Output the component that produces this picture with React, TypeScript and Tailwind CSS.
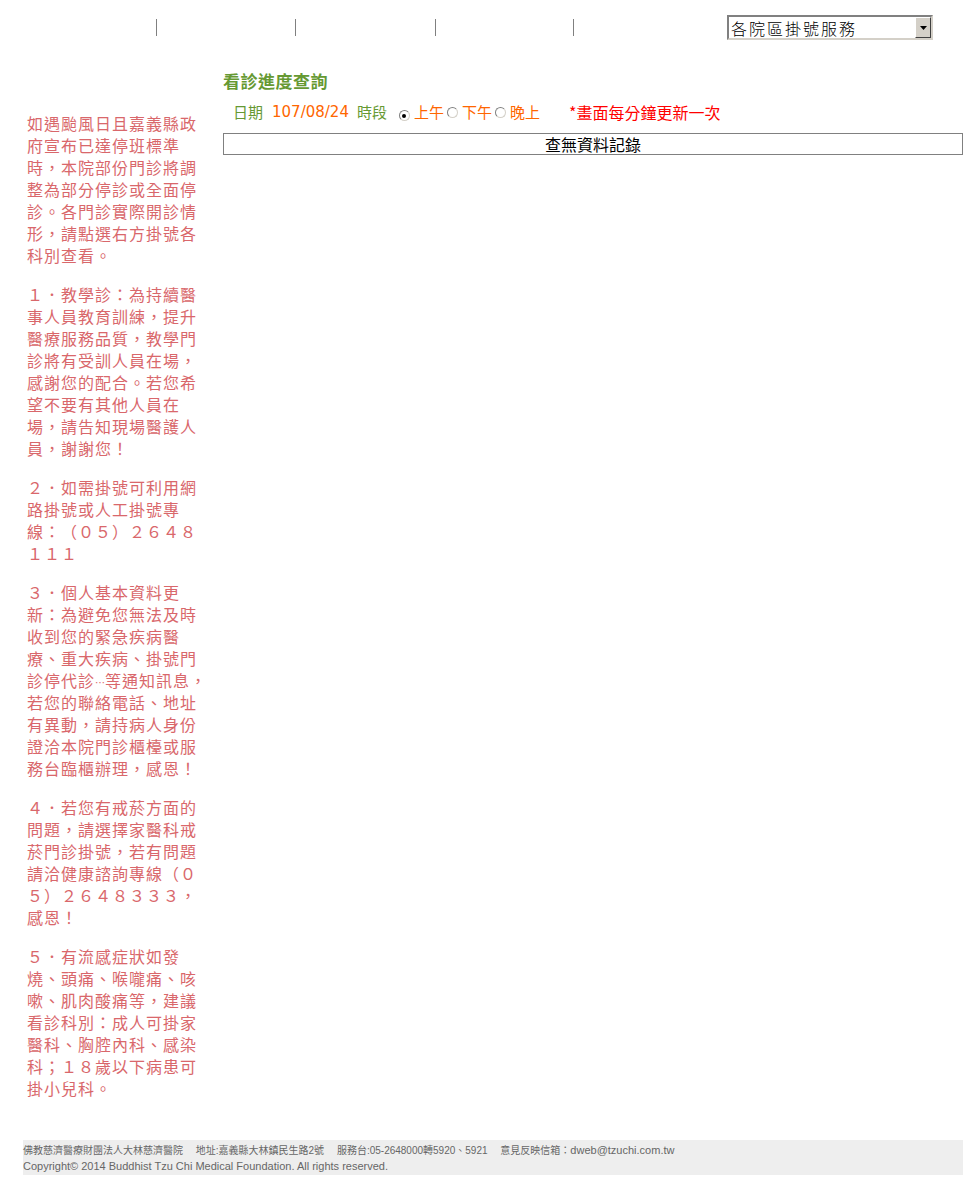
const sideParas: React.ReactNode[] = [
  "如遇颱風日且嘉義縣政府宣布已達停班標準時，本院部份門診將調整為部分停診或全面停診。各門診實際開診情形，請點選右方掛號各科別查看。",
  "１．教學診：為持續醫事人員教育訓練，提升醫療服務品質，教學門診將有受訓人員在場，感謝您的配合。若您希望不要有其他人員在場，請告知現場醫護人員，謝謝您！",
  "２．如需掛號可利用網路掛號或人工掛號專線：（０５）２６４８１１１",
  <>
    ３．個人基本資料更新：為避免您無法及時收到您的緊急疾病醫療、重大疾病、掛號門診停代診
    <span className="text-[10px] leading-none tracking-normal">…</span>
    等通知訊息，若您的聯絡電話、地址有異動，請持病人身份證洽本院門診櫃檯或服務台臨櫃辦理，感恩！
  </>,
  "４．若您有戒菸方面的問題，請選擇家醫科戒菸門診掛號，若有問題請洽健康諮詢專線（０５）２６４８３３３，感恩！",
  "５．有流感症狀如發燒、頭痛、喉嚨痛、咳嗽、肌肉酸痛等，建議看診科別：成人可掛家醫科、胸腔內科、感染科；１８歲以下病患可掛小兒科。",
];

const Radio = ({ checked }: { checked?: boolean }) => (
  <span className="inline-flex h-[11px] w-[11px] items-center justify-center rounded-full border border-t-[#808080] border-l-[#808080] border-r-[#d4d0c8] border-b-[#d4d0c8] bg-white">
    {checked && <span className="h-[4px] w-[4px] rounded-full bg-black" />}
  </span>
);

export default function App() {
  return (
    <div className="ml-[23px] w-[940px] font-['Noto_Sans_CJK_TC',sans-serif] text-black [text-spacing-trim:space-all]">
      {/* header nav */}
      <header className="flex h-[55px] items-start pt-[15px]">
        <div className="w-[133px]" />
        <div className="mt-[4px] h-[17px] w-[139px] border-l border-[#808080]" />
        <div className="mt-[4px] h-[17px] w-[140px] border-l border-[#808080]" />
        <div className="mt-[4px] h-[17px] w-[138px] border-l border-[#808080]" />
        <div className="mt-[4px] h-[17px] w-[154px] border-l border-[#808080]" />
        <div className="flex h-[25px] w-[206px] items-center border-2 border-t-[#808080] border-l-[#808080] border-r-[#d4d0c8] border-b-[#d4d0c8] bg-white pl-[2px]">
          <span className="flex-1 text-[16px] leading-none tracking-[2px] font-light">各院區掛號服務</span>
          <span className="flex h-[21px] w-[16px] items-center justify-center border border-t-white border-l-white border-r-[#404040] border-b-[#404040] bg-[#d4d0c8]">
            <svg width="7" height="4" viewBox="0 0 7 4">
              <path d="M0 0h7L3.5 4z" fill="#000" />
            </svg>
          </span>
        </div>
      </header>

      <div className="flex">
        {/* sidebar notes */}
        <aside className="w-[200px] pl-[4px] pt-[57px]">
          <div className="w-[182px] text-[16px] leading-[22px] tracking-[1px] text-[#d9676b]">
            {sideParas.map((p, i) => (
              <p key={i} className="mb-[17px]">
                {p}
              </p>
            ))}
          </div>
        </aside>

        {/* main */}
        <main className="w-[740px]">
          <h2 className="mt-[15px] text-[17px] leading-[22px] font-bold tracking-[0.5px] text-[#669933]">
            看診進度查詢
          </h2>
          <div className="mt-[9px] flex h-[22px] items-center pl-[10px] text-[15px]">
            <span className="text-[#669933]">日期</span>
            <span className="ml-[9px] font-['DejaVu_Sans',sans-serif] text-[#ff6600]">107/08/24</span>
            <span className="ml-[8px] text-[#669933]">時段</span>
            <span className="ml-[12px]"><Radio checked /></span>
            <span className="ml-[4px] text-[#ff6600]">上午</span>
            <span className="ml-[3px]"><Radio /></span>
            <span className="ml-[4px] text-[#ff6600]">下午</span>
            <span className="ml-[3px]"><Radio /></span>
            <span className="ml-[4px] text-[#ff6600]">晚上</span>
            <span className="ml-[29px] text-[16px] text-[#ff0000]">*畫面每分鐘更新一次</span>
          </div>
          <div className="mt-[10px] flex h-[22px] items-center justify-center border border-[#808080] text-[16px] leading-none">
            查無資料記錄
          </div>
        </main>
      </div>

      {/* footer */}
      <footer className="mt-[24px] h-[35px] bg-[#eeeeee] pt-[2px] font-['Liberation_Sans','Noto_Sans_CJK_TC',sans-serif] text-[10px] leading-[16px] text-[#666666]">
        <div>
          佛教慈濟醫療財團法人大林慈濟醫院　 地址:嘉義縣大林鎮民生路2號　 服務台:05-2648000轉5920、5921　 意見反映信箱：
          <span className="text-[11px]">dweb@tzuchi.com.tw</span>
        </div>
        <div className="text-[11px] leading-[15px]">Copyright© 2014 Buddhist Tzu Chi Medical Foundation. All rights reserved.</div>
      </footer>
    </div>
  );
}
